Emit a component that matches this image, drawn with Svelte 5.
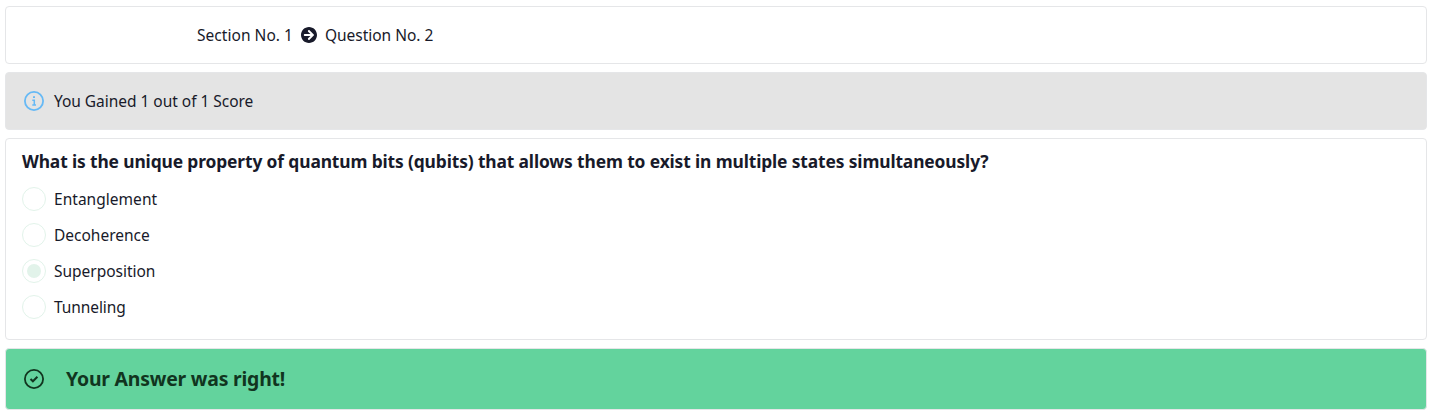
<script>
  const options = ['Entanglement', 'Decoherence', 'Superposition', 'Tunneling'];
  const tracking = [0.03, 0, -0.02, -0.08];
  const selected = 2;
</script>

<main>
  <section class="card crumbs">
    <span class="sec">Section No. 1</span>
    <svg width="16" height="16" viewBox="8 8 496 496" fill="currentColor"><path d="M256 8c137 0 248 111 248 248S393 504 256 504 8 393 8 256 119 8 256 8zm-28.900 143.600l75.500 72.400H120c-13.300 0-24 10.700-24 24v16c0 13.300 10.700 24 24 24h182.600l-75.500 72.400c-9.700 9.300-9.900 24.800-.4 34.300l11 10.900c9.400 9.400 24.600 9.400 33.900 0L404.300 273c9.400-9.400 9.400-24.600 0-33.900L271.600 106.300c-9.400-9.400-24.600-9.400-33.900 0l-11 10.900c-9.500 9.600-9.300 25.100.4 34.400z" /></svg>
    <span class="que">Question No. 2</span>
  </section>

  <section class="card score">
    <svg width="24" height="24" viewBox="0 0 24 24" fill="none" stroke="#66b9f5" stroke-width="1.8"><circle cx="12" cy="12" r="9.100" /><path d="M10.300 11.200h2v4.600M10.300 15.900h3.700" stroke-width="1.500" /><path d="M11 8.100h2" stroke-width="1.800" /></svg>
    <span class="gained">You Gained 1 out of 1 Score</span>
  </section>

  <section class="card question">
    <h2>What is the unique property of quantum bits (qubits) that allows them to exist in multiple states simultaneously?</h2>
    <ul>
      {#each options as option, i}
        <li>
          <span class="radio" class:checked={i === selected}></span>
          <span class="label" style="letter-spacing: {tracking[i]}px">{option}</span>
        </li>
      {/each}
    </ul>
  </section>

  <section class="card result">
    <svg width="24" height="24" viewBox="0 0 24 24" fill="none" stroke="currentColor" stroke-width="1.800"><circle cx="12" cy="12" r="9.100" /><path d="M8.500 12l2.400 2.300 4.500-4.500" stroke-width="2" /></svg>
    <strong>Your Answer was right!</strong>
  </section>
</main>

<style>
  :global(body) { background: #fff; }
  main {
    display: flex;
    flex-direction: column;
    gap: 8px;
    padding: 6px 5px 3px;
    font: 15.5px/24px "Noto Sans", sans-serif;
    color: #181a2a;
    white-space: nowrap;
  }
  svg { display: block; flex: none; }
  .card {
    box-sizing: border-box;
    border: 1px solid #e5e6e8;
    border-radius: 4px;
    padding: 0 16px;
  }
  .crumbs { display: flex; align-items: center; height: 58px; padding-left: 191px; }
  .crumbs svg { margin: 0 8px; }
  .sec { width: 96px; letter-spacing: 0.04px; }
  .que { letter-spacing: -0.03px; }
  .score { display: flex; align-items: center; gap: 8px; height: 58px; background: #e4e4e4; }
  .gained { letter-spacing: -0.03px; }
  .question { height: 202px; padding-top: 8px; }
  h2 { margin: 0; font-size: 17.4px; line-height: 28px; font-weight: 700; letter-spacing: -0.13px; }
  ul { list-style: none; margin: 12px 0 0; padding: 0; display: grid; gap: 12px; }
  li { display: flex; align-items: center; gap: 8px; height: 24px; }
  .radio {
    box-sizing: border-box;
    width: 24px;
    height: 24px;
    border: 1px solid #e2f3ea;
    border-radius: 50%;
    display: grid;
    place-items: center;
  }
  .checked::before { content: ""; width: 14px; height: 14px; border-radius: 50%; background: #e2f3ea; }
  .result { display: flex; align-items: center; gap: 20px; height: 62px; background: #63d39d; color: #11351f; }
  strong { font-size: 19.400px; line-height: 28px; letter-spacing: -0.2px; }
</style>
